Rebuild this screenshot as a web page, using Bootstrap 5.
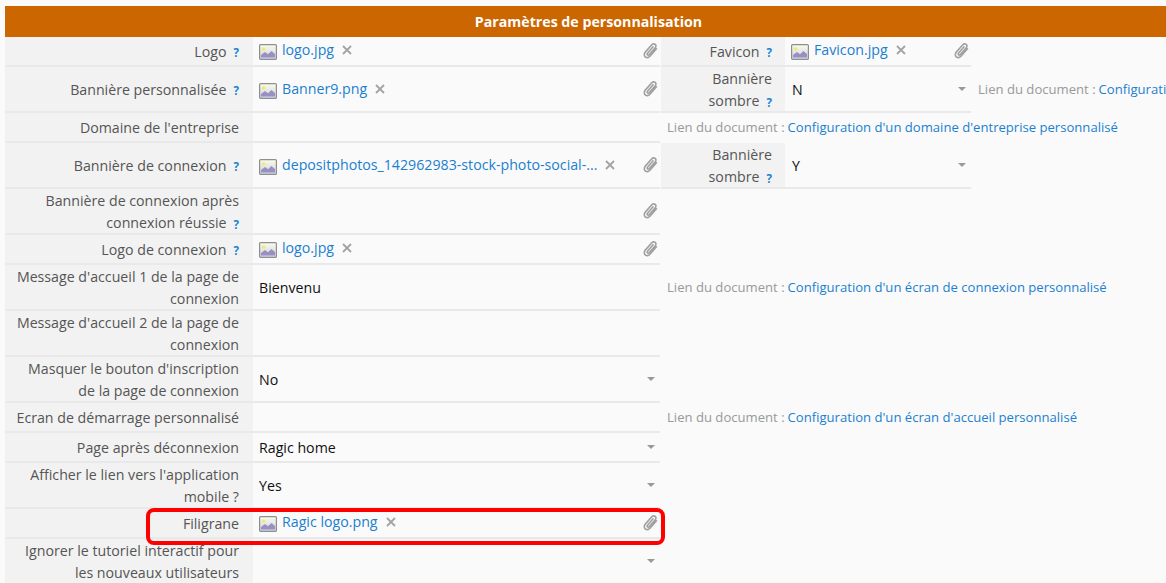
<!DOCTYPE html>
<html lang="fr"><head><meta charset="utf-8"><title>Paramètres</title>
<link rel="stylesheet" href="https://cdn.jsdelivr.net/npm/bootstrap@5.3.0/dist/css/bootstrap.min.css">
<style>
html,body{height:583px;overflow:hidden}
body{background:#fafafa;font-family:"Open Sans","Liberation Sans",sans-serif;font-size:14.2px;color:#111;position:relative}
.sheet{padding:6px 0 0 5px;width:1172px}
.banner{background:#cc6600;color:#fff;font-weight:700;font-size:14.2px;height:31px;line-height:31px;text-align:center}
.line{height:30px;white-space:nowrap}
.line.tall{height:46px}
.lab{width:248px;flex:none;background:#f2f2f2;color:#555;text-align:right;padding:2px 14px 0 8px;line-height:22px;border-bottom:2px solid #e9e9e9;display:flex;align-items:center;justify-content:flex-end}
.lab2{width:124px;flex:none;padding:2px 13px 0 4px}
.val{width:407px;flex:none;border-bottom:2px solid #e9e9e9;padding:2px 7px 0 6px;display:flex;align-items:center;position:relative}
.val2{width:186px;padding-left:7px}
.val2.up{padding-left:6px}
.up{padding-bottom:4px}
.tall .up{padding-bottom:2px}
.qm{color:#1b82d2;font-size:11.500px;font-weight:700;margin-left:7px;position:relative;top:1px}
.fl{color:#1a7fd0;text-decoration:none}
.x-i{margin-left:8px;flex:none}
.img-i{flex:none;margin-right:5px;position:relative;top:2px}
.clip{position:absolute;right:2px;top:50%;margin-top:-9px}
.car{position:absolute;right:5px;top:50%;margin-top:-2px;width:0;height:0;border-left:4.5px solid transparent;border-right:4.5px solid transparent;border-top:4.5px solid #999}
.gap2{margin-left:1px}
.doc{color:#999;font-size:13.100px;padding-left:7px;display:flex;align-items:center}
.doc a{color:#1a7fd0;text-decoration:none;margin-left:3px}
.mark-box{position:absolute;left:146px;top:508px;width:519px;height:37px;border:4px solid #f00;border-radius:8px}
</style></head><body>
<svg width="0" height="0" class="d-block" aria-hidden="true"><defs>
<linearGradient id="g" x1="0" y1="0" x2="0" y2="1"><stop offset="0" stop-color="#fbfbe6"/><stop offset="1" stop-color="#c9d3ea"/></linearGradient>
<symbol id="pic" viewBox="0 0 18 16"><rect x=".6" y=".6" width="16.800" height="14.800" rx="1" fill="url(#g)" stroke="#8e8e8e" stroke-width="1.200"/><circle cx="4.600" cy="5" r="1.800" fill="#f3e96a"/><path d="M2 13.500V11l4-3 3 2.200 3.400-3.200L16 10v3.500z" fill="#9a8fc0"/></symbol>
<symbol id="cr" viewBox="0 0 10 10"><path d="M1 1l8 8M9 1l-8 8" stroke="#a3a3a3" stroke-width="1.800" fill="none"/></symbol>
<symbol id="pc" viewBox="0 0 14 16"><path d="M12.600 6.400 6.700 13.200c-1.500 1.600-3.500 1.700-4.700.7-1.200-1-1.100-3 .3-4.600L8 2.800c1.100-1.200 2.500-1.300 3.400-.5.900.8.900 2.100-.1 3.300L5.900 11.800c-.6.700-1.200.8-1.700.4-.5-.4-.4-1.100.2-1.800L9.400 4.500" fill="none" stroke="#a0a0a0" stroke-width="1.500" stroke-linecap="round"/></symbol>
</defs></svg>
<main class="sheet">
<div class="banner">Paramètres de personnalisation</div>

<div class="line d-flex">
 <div class="lab">Logo<span class="qm">?</span></div>
 <div class="val up"><svg class="img-i" width="18" height="16"><use href="#pic"/></svg><a class="fl" href="#">logo.jpg</a><svg class="x-i" width="10" height="10"><use href="#cr"/></svg><svg class="clip" width="15" height="17"><use href="#pc"/></svg></div>
 <div class="gap2"></div>
 <div class="lab lab2">Favicon<span class="qm">?</span></div>
 <div class="val val2 up"><svg class="img-i" width="18" height="16"><use href="#pic"/></svg><a class="fl" href="#">Favicon.jpg</a><svg class="x-i" width="10" height="10"><use href="#cr"/></svg><svg class="clip" width="15" height="17"><use href="#pc"/></svg></div>
</div>

<div class="line tall d-flex">
 <div class="lab">Bannière personnalisée<span class="qm">?</span></div>
 <div class="val up"><svg class="img-i" width="18" height="16"><use href="#pic"/></svg><a class="fl" href="#">Banner9.png</a><svg class="x-i" width="10" height="10"><use href="#cr"/></svg><svg class="clip" width="15" height="17"><use href="#pc"/></svg></div>
 <div class="gap2"></div>
 <div class="lab lab2"><span>Bannière<br>sombre<span class="qm">?</span></span></div>
 <div class="val val2">N<span class="car"></span></div>
 <div class="doc">Lien du document :<a href="#">Configuration d'un logo personnalisé</a></div>
</div>

<div class="line d-flex">
 <div class="lab">Domaine de l'entreprise</div>
 <div class="val"></div>
 <div class="doc">Lien du document :<a href="#">Configuration d'un domaine d'entreprise personnalisé</a></div>
</div>

<div class="line tall d-flex">
 <div class="lab">Bannière de connexion<span class="qm">?</span></div>
 <div class="val up"><svg class="img-i" width="18" height="16"><use href="#pic"/></svg><a class="fl" href="#">depositphotos_142962983-stock-photo-social-...</a><svg class="x-i" width="10" height="10"><use href="#cr"/></svg><svg class="clip" width="15" height="17"><use href="#pc"/></svg></div>
 <div class="gap2"></div>
 <div class="lab lab2"><span>Bannière<br>sombre<span class="qm">?</span></span></div>
 <div class="val val2">Y<span class="car"></span></div>
</div>

<div class="line tall d-flex">
 <div class="lab"><span>Bannière de connexion après<br>connexion réussie<span class="qm">?</span></span></div>
 <div class="val"><svg class="clip" width="15" height="17"><use href="#pc"/></svg></div>
</div>

<div class="line d-flex">
 <div class="lab">Logo de connexion<span class="qm">?</span></div>
 <div class="val up"><svg class="img-i" width="18" height="16"><use href="#pic"/></svg><a class="fl" href="#">logo.jpg</a><svg class="x-i" width="10" height="10"><use href="#cr"/></svg><svg class="clip" width="15" height="17"><use href="#pc"/></svg></div>
</div>

<div class="line tall d-flex">
 <div class="lab"><span>Message d'accueil 1 de la page de<br>connexion</span></div>
 <div class="val">Bienvenu</div>
 <div class="doc">Lien du document :<a href="#">Configuration d'un écran de connexion personnalisé</a></div>
</div>

<div class="line tall d-flex">
 <div class="lab"><span>Message d'accueil 2 de la page de<br>connexion</span></div>
 <div class="val"></div>
</div>

<div class="line tall d-flex">
 <div class="lab"><span>Masquer le bouton d'inscription<br>de la page de connexion</span></div>
 <div class="val">No<span class="car"></span></div>
</div>

<div class="line d-flex">
 <div class="lab">Ecran de démarrage personnalisé</div>
 <div class="val"></div>
 <div class="doc">Lien du document :<a href="#">Configuration d'un écran d'accueil personnalisé</a></div>
</div>

<div class="line d-flex">
 <div class="lab">Page après déconnexion</div>
 <div class="val">Ragic home<span class="car"></span></div>
</div>

<div class="line tall d-flex">
 <div class="lab"><span>Afficher le lien vers l'application<br>mobile ?</span></div>
 <div class="val">Yes<span class="car"></span></div>
</div>

<div class="line d-flex">
 <div class="lab">Filigrane</div>
 <div class="val up"><svg class="img-i" width="18" height="16"><use href="#pic"/></svg><a class="fl" href="#">Ragic logo.png</a><svg class="x-i" width="10" height="10"><use href="#cr"/></svg><svg class="clip" width="15" height="17"><use href="#pc"/></svg></div>
</div>

<div class="line tall d-flex">
 <div class="lab"><span>Ignorer le tutoriel interactif pour<br>les nouveaux utilisateurs</span></div>
 <div class="val"><span class="car"></span></div>
</div>
</main>
<div class="mark-box"></div>
</body></html>
